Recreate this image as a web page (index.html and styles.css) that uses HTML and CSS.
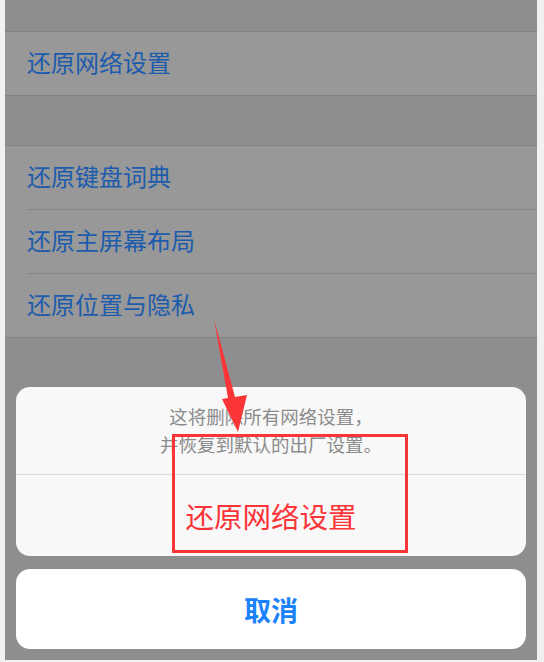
FILE: index.html
```html
<!DOCTYPE html>
<html lang="zh">
<head>
<meta charset="utf-8">
<link rel="stylesheet" href="styles.css">
</head>
<body>
<div class="screen">
  <div class="list">
    <div class="gap top"></div>
    <div class="group">
      <div class="row">还原网络设置</div>
    </div>
    <div class="gap"></div>
    <div class="group">
      <div class="row">还原键盘词典</div>
      <div class="row">还原主屏幕布局</div>
      <div class="row">还原位置与隐私</div>
    </div>
  </div>

  <div class="sheet">
    <div class="card">
      <div class="message">这将删除所有网络设置，<br>并恢复到默认的出厂设置。</div>
      <div class="action destructive">还原网络设置</div>
    </div>
    <div class="card cancel">取消</div>
  </div>

  <svg class="arrow" width="60" height="130" viewBox="0 0 60 130">
    <polygon points="19,9 33,88 27,89 43,122 52,85 40,87" fill="#fb3438"/>
  </svg>
  <div class="highlight"></div>
</div>
</body>
</html>
```
FILE: styles.css
```css
html, body {
  margin: 0;
  padding: 0;
}
body {
  background: #f1f1f1;
  width: 544px;
  height: 662px;
  font-family: "Noto Sans CJK SC", "Noto Sans", sans-serif;
}
.screen {
  position: relative;
  margin-left: 5px;
  width: 532px;
  height: 660px;
  background: #8e8e90;
  overflow: hidden;
}
.list {
  display: flex;
  flex-direction: column;
}
.gap {
  height: 49px;
}
.gap.top {
  height: 31px;
}
.group {
  background: #989898;
  border-top: 1px solid #828284;
  border-bottom: 1px solid #828284;
}
.row {
  height: 60px;
  line-height: 60px;
  padding-bottom: 3px;
  padding-left: 22px;
  font-size: 24px;
  color: #1d5cad;
}
.row + .row {
  border-top: 1px solid #888889;
  margin-left: 22px;
  padding-left: 0;
}
.sheet {
  position: absolute;
  left: 11px;
  right: 11px;
  bottom: 11px;
  display: flex;
  flex-direction: column;
  gap: 13px;
}
.card {
  background: #f8f8f8;
  border-radius: 14px;
  display: flex;
  flex-direction: column;
}
.message {
  padding: 15px 20px 16px;
  text-align: center;
  font-size: 18.5px;
  line-height: 28px;
  color: #8b8b8b;
  border-bottom: 1px solid #dcdcdc;
}
.action {
  height: 81px;
  display: flex;
  align-items: center;
  justify-content: center;
  font-size: 28.5px;
}
.destructive {
  color: #fb3438;
}
.cancel {
  background: #ffffff;
  height: 80px;
  align-items: center;
  justify-content: center;
  font-size: 27px;
  font-weight: 700;
  color: #1a82fb;
}
.arrow {
  position: absolute;
  left: 190px;
  top: 310px;
}
.highlight {
  position: absolute;
  left: 167px;
  top: 434px;
  width: 230px;
  height: 113px;
  border: 3px solid #fb3438;
}
```
